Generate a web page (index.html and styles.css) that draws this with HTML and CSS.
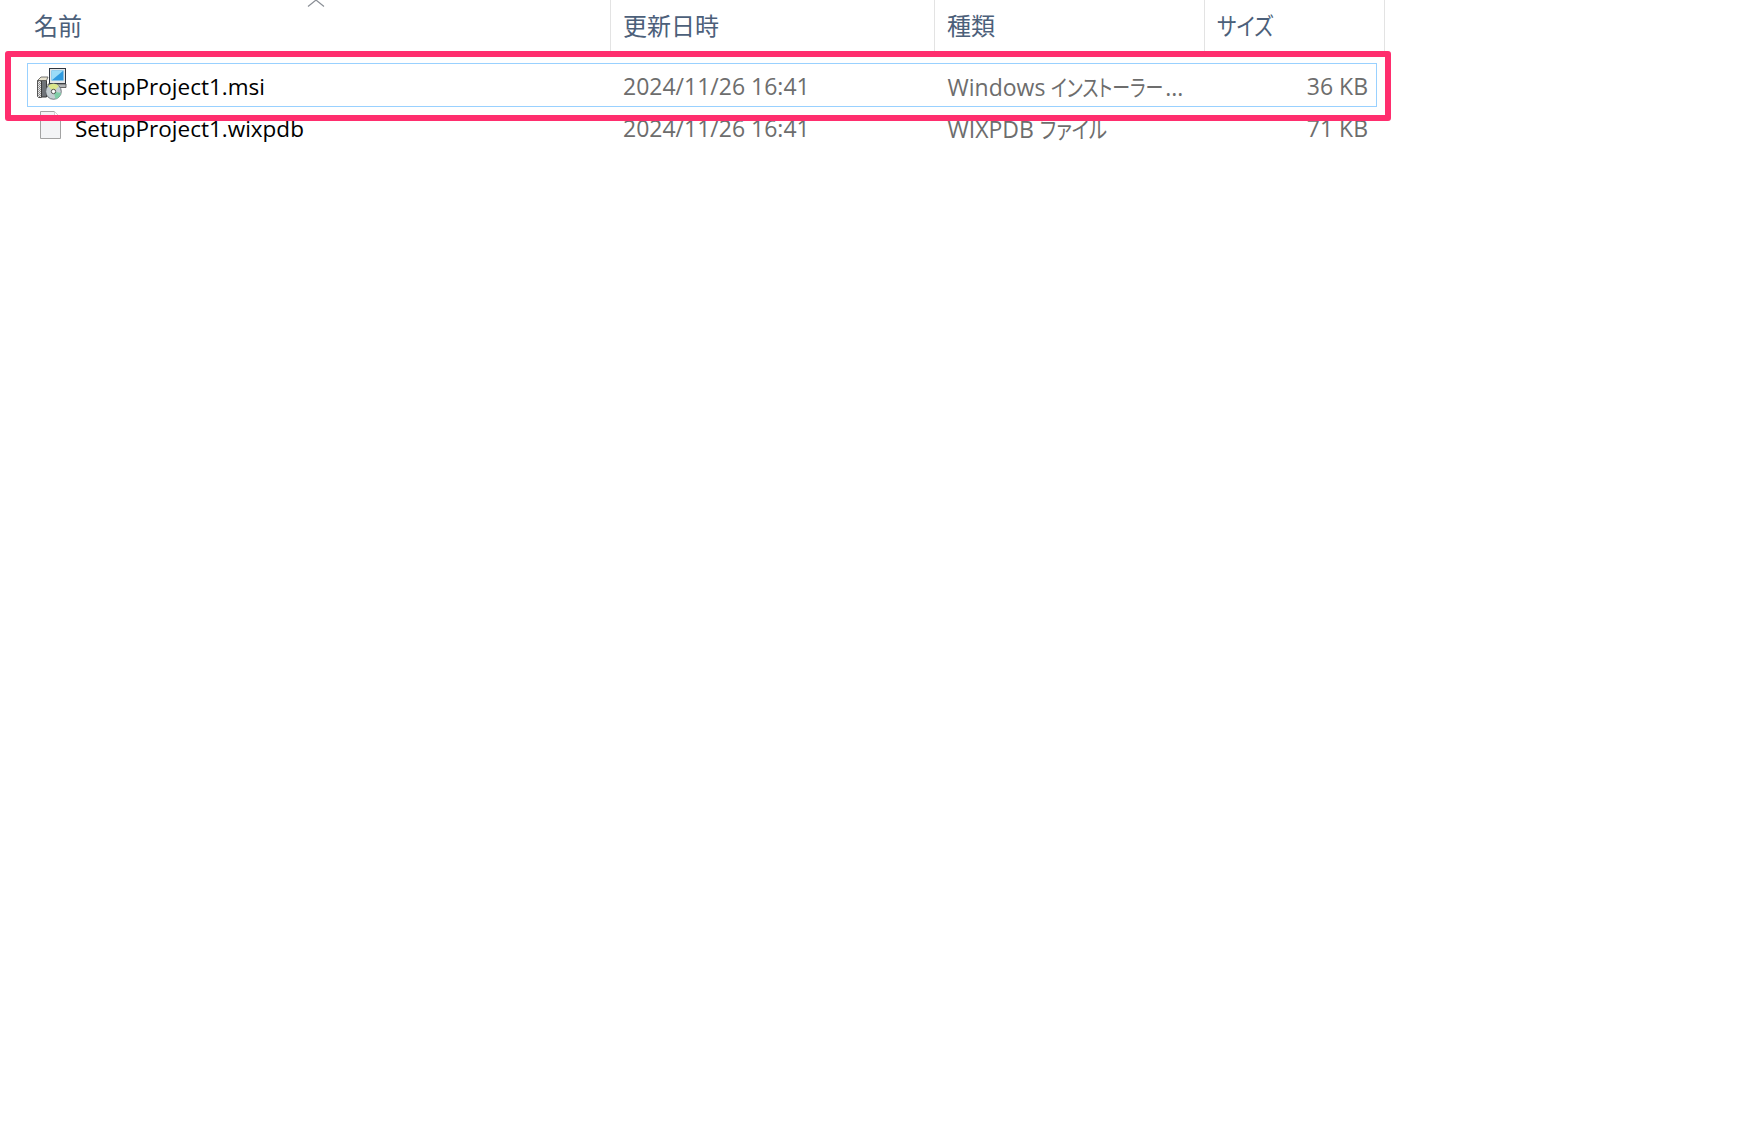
FILE: index.html
```html
<!DOCTYPE html>
<html lang="ja">
<head>
<meta charset="utf-8">
<title>SetupProject1</title>
<link rel="stylesheet" href="styles.css">
</head>
<body>
<main class="view">
  <svg class="sort" viewBox="0 0 18 7" aria-hidden="true"><path d="M1 6.500 9 0l8 6.500" fill="none" stroke="#8a8f96" stroke-width="1.200"/></svg>
  <div class="head">
    <div class="hcell c-name">名前</div>
    <div class="hcell c-date">更新日時</div>
    <div class="hcell c-type">種類</div>
    <div class="hcell c-size"><span class="kana-head">サイズ</span></div>
  </div>
  <div class="rows">
    <div class="row selected">
      <div class="cell c-name name">
        <svg class="icon" viewBox="0 0 32 32" aria-hidden="true">
          <defs>
            <pattern id="hatch" width="2" height="2" patternUnits="userSpaceOnUse">
              <rect width="2" height="2" fill="#e6e6e6"/>
              <rect width="1" height="1" fill="#8a8a8a"/>
              <rect x="1" y="1" width="1" height="1" fill="#9a9a9a"/>
            </pattern>
          </defs>
          <path d="M2.500 12.500h4v17h-3l-1-1z" fill="url(#hatch)" stroke="#555" stroke-width="1"/>
          <path d="M6.500 12.500h5v16.500h-5z" fill="#6f7378" stroke="#3c3c3c" stroke-width="1"/>
          <path d="M2.500 12.500 6 9h7l-1.500 3.500z" fill="#e9e4cf" stroke="#555" stroke-width=".8"/>
          <rect x="14.500" y=".5" width="16" height="15" fill="#e4e6e8" stroke="#2f3640"/>
          <rect x="16.500" y="2.500" width="12" height="10" fill="#2f9be0"/>
          <path d="M16.500 2.500h12L16.500 12.500z" fill="#9adcf8"/>
          <path d="M13 16h18v3.500H13z" fill="#b4b6b8" stroke="#4a4a4a" stroke-width=".8"/>
          <circle cx="18.500" cy="23.500" r="7.800" fill="#c4ced2" stroke="#5b6066" stroke-width=".8"/>
          <path d="M18.500 23.500 13 18a7.800 7.800 0 0 1 11 0z" fill="#dbe68c"/>
          <path d="M18.500 23.500l7.600 1.500a7.800 7.800 0 0 1-5.600 6z" fill="#7fcfa8"/>
          <circle cx="18.500" cy="23.500" r="2.200" fill="#fff" stroke="#333" stroke-width=".8"/>
        </svg>
        <span>SetupProject1.msi</span>
      </div>
      <div class="cell c-date">2024/11/26 16:41</div>
      <div class="cell c-type">Windows <span class="kana kana-long">インストーラー</span>...</div>
      <div class="cell c-size">36 KB</div>
    </div>
    <div class="row">
      <div class="cell c-name name">
        <svg class="icon page" viewBox="0 0 32 32" aria-hidden="true">
          <path d="M5.500 2.500h14l6 6v21h-20z" fill="#f3f4f6" stroke="#a3a3a3"/>
          <path d="M19.500 2.500v6h6" fill="#fff" stroke="#d0d0d0"/>
        </svg>
        <span class="wix">SetupProject1.wixpdb</span>
      </div>
      <div class="cell c-date">2024/11/26 16:41</div>
      <div class="cell c-type">WIXPDB <span class="kana kana-short">ファイル</span></div>
      <div class="cell c-size">71 KB</div>
    </div>
  </div>
  <div class="highlight"></div>
</main>
</body>
</html>
```
FILE: styles.css
```css
html, body {
  margin: 0;
  padding: 0;
  background: #fff;
}
body {
  width: 1748px;
  height: 1132px;
  overflow: hidden;
  font-family: "Open Sans", "Noto Sans CJK JP", sans-serif;
  font-size: 23px;
  font-feature-settings: "palt";
  color: #6d6d6d;
}
.view {
  position: relative;
  height: 100%;
}
.sort {
  position: absolute;
  left: 307px;
  top: 0;
  width: 18px;
  height: 7px;
}
.head {
  display: grid;
  grid-template-columns: 611px 324px 270px 180px;
  width: 1385px;
  height: 51px;
}
.hcell {
  border-right: 1px solid #e3e3e3;
  color: #4c607a;
  font-size: 24px;
  padding: 8px 0 0 12px;
  line-height: 36px;
  height: 43px;
  white-space: nowrap;
}
.hcell.c-name {
  padding-left: 34px;
}
.kana-head {
  display: inline-block;
  transform: scaleX(.86);
  transform-origin: left center;
}
.rows {
  margin: 12px 0 0 27px;
  width: 1350px;
}
.row {
  display: grid;
  grid-template-columns: 583px 324.500px 270px 170.500px;
  height: 41px;
  align-items: center;
  box-sizing: border-box;
  border: 1px solid transparent;
}
.row.selected {
  height: 44px;
  padding-top: 2px;
  border-color: #99d1ff;
}
.cell {
  white-space: nowrap;
  padding-left: 12px;
}
.cell.c-name {
  padding-left: 7px;
}
.kana {
  display: inline-block;
  transform-origin: left center;
}
.kana-long {
  transform: scaleX(.78);
  margin-right: -30px;
}
.kana-short {
  transform: scaleX(.84);
  margin-right: -12px;
}
.name {
  display: flex;
  align-items: center;
  gap: 8px;
  color: #000;
  font-size: 22.500px;
}
.wix {
  position: relative;
  top: 1px;
}
.cell.c-size {
  text-align: right;
  padding: 0 8px 0 0;
}
.icon {
  width: 32px;
  height: 32px;
  flex: none;
}
.selected .icon {
  margin-top: -4px;
}
.icon.page {
  margin-top: -5px;
}
.highlight {
  position: absolute;
  left: 5px;
  top: 51px;
  width: 1386px;
  height: 70px;
  box-sizing: border-box;
  border: 6px solid #ff2e6e;
  border-radius: 3px;
}
```
